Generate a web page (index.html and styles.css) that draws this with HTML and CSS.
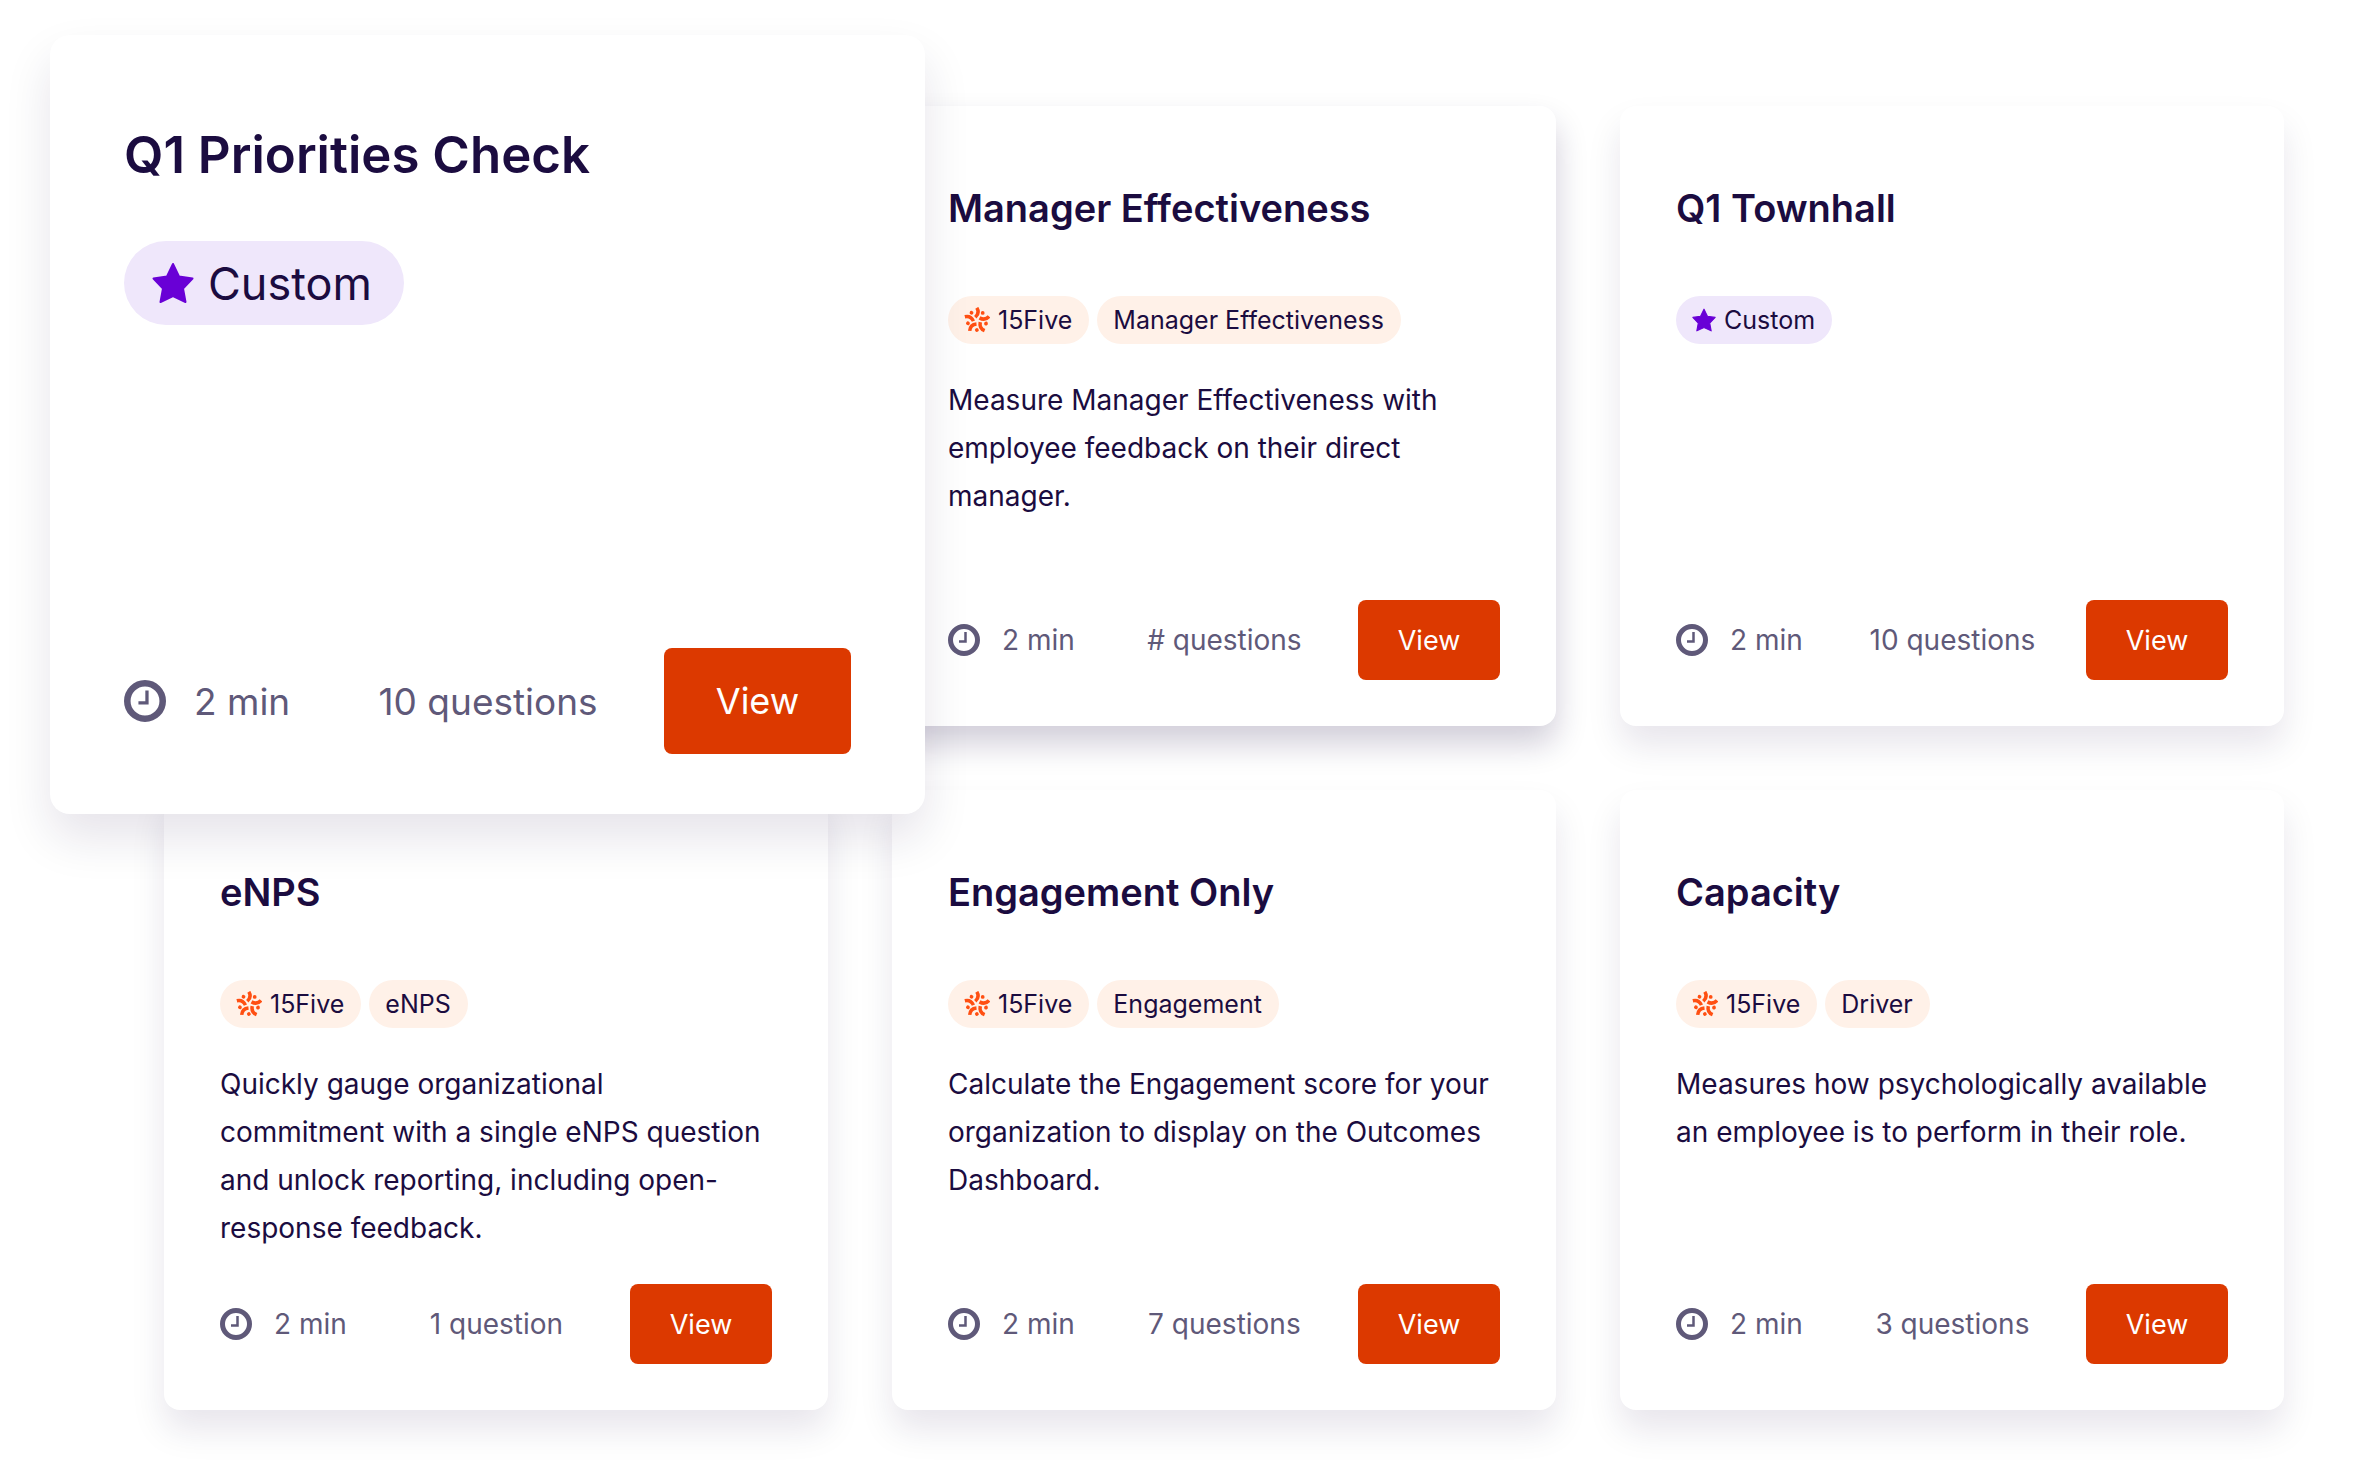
FILE: index.html
```html
<!DOCTYPE html>
<html lang="en">
<head>
    <meta charset="UTF-8">
    <meta name="viewport" content="width=device-width, initial-scale=1.0">
    <title>Surveys</title>
    <link rel="stylesheet" href="styles.css">
</head>
<body>
    <!-- Shared icons -->
    <svg class="sprite" aria-hidden="true">
        <symbol id="star" viewBox="0 0 42 40">
            <path d="M21 1 L27 13.500 L40.500 15.500 L31 25.500 L33.500 39 L21 33 L8.500 39 L11 25.500 L1.500 15.500 L15 13.500 Z" fill="#6900d6" stroke="#6900d6" stroke-width="2" stroke-linejoin="round"/>
        </symbol>
        <symbol id="clock" viewBox="0 0 32 32">
            <circle cx="16" cy="16" r="13.500" fill="none" stroke="#5f5979" stroke-width="5"/>
            <path d="M17.500 8 V17.500 H11" fill="none" stroke="#5f5979" stroke-width="2.500"/>
        </symbol>
        <symbol id="burst" viewBox="0 0 26 26">
            <g id="ray">
                <path d="M12.800 0.800 Q16 6 11.300 10.300" fill="none" stroke="#ff4f12" stroke-width="3.500"/>
                <circle cx="18.700" cy="5.900" r="1.900" fill="#ff4f12"/>
            </g>
            <use href="#ray" transform="rotate(72 13 13.500)"/>
            <use href="#ray" transform="rotate(144 13 13.500)"/>
            <use href="#ray" transform="rotate(216 13 13.500)"/>
            <use href="#ray" transform="rotate(288 13 13.500)"/>
        </symbol>
    </svg>

    <main class="board">
        <article class="card featured">
            <h2>Q1 Priorities Check</h2>
            <div class="tags">
                <span class="tag custom"><svg class="star"><use href="#star"/></svg>Custom</span>
            </div>
            <div class="footer">
                <span class="time"><svg class="clock"><use href="#clock"/></svg>2 min</span>
                <span class="count">10 questions</span>
                <button class="btn">View</button>
            </div>
        </article>

        <article class="card raised">
            <h2>Manager Effectiveness</h2>
            <div class="tags">
                <span class="tag"><svg class="burst"><use href="#burst"/></svg>15Five</span>
                <span class="tag">Manager Effectiveness</span>
            </div>
            <p>Measure Manager Effectiveness with<br>employee feedback on their direct<br>manager.</p>
            <div class="footer">
                <span class="time"><svg class="clock"><use href="#clock"/></svg>2 min</span>
                <span class="count"># questions</span>
                <button class="btn">View</button>
            </div>
        </article>

        <article class="card">
            <h2>Q1 Townhall</h2>
            <div class="tags">
                <span class="tag custom"><svg class="star"><use href="#star"/></svg>Custom</span>
            </div>
            <div class="footer">
                <span class="time"><svg class="clock"><use href="#clock"/></svg>2 min</span>
                <span class="count">10 questions</span>
                <button class="btn">View</button>
            </div>
        </article>

        <article class="card">
            <h2>eNPS</h2>
            <div class="tags">
                <span class="tag"><svg class="burst"><use href="#burst"/></svg>15Five</span>
                <span class="tag">eNPS</span>
            </div>
            <p>Quickly gauge organizational<br>commitment with a single eNPS question<br>and unlock reporting, including open-<br>response feedback.</p>
            <div class="footer">
                <span class="time"><svg class="clock"><use href="#clock"/></svg>2 min</span>
                <span class="count">1 question</span>
                <button class="btn">View</button>
            </div>
        </article>

        <article class="card">
            <h2>Engagement Only</h2>
            <div class="tags">
                <span class="tag"><svg class="burst"><use href="#burst"/></svg>15Five</span>
                <span class="tag">Engagement</span>
            </div>
            <p>Calculate the Engagement score for your<br>organization to display on the Outcomes<br>Dashboard.</p>
            <div class="footer">
                <span class="time"><svg class="clock"><use href="#clock"/></svg>2 min</span>
                <span class="count">7 questions</span>
                <button class="btn">View</button>
            </div>
        </article>

        <article class="card">
            <h2>Capacity</h2>
            <div class="tags">
                <span class="tag"><svg class="burst"><use href="#burst"/></svg>15Five</span>
                <span class="tag">Driver</span>
            </div>
            <p>Measures how psychologically available<br>an employee is to perform in their role.</p>
            <div class="footer">
                <span class="time"><svg class="clock"><use href="#clock"/></svg>2 min</span>
                <span class="count">3 questions</span>
                <button class="btn">View</button>
            </div>
        </article>
    </main>
</body>
</html>
```
FILE: styles.css
```css
* {
    box-sizing: border-box;
}
body {
    margin: 0;
    background: white;
    color: #1b0c40;
    font-family: Inter, "Open Sans", sans-serif;
}
.sprite {
    display: none;
}
.board {
    display: grid;
    grid-template-columns: repeat(3, 1fr);
    gap: 64px;
    padding: 106px 72px 64px 164px;
}
.card {
    display: flex;
    flex-direction: column;
    min-height: 620px;
    padding: 70px 56px 46px;
    background: white;
    border-radius: 16px;
    box-shadow: 0 20px 34px rgba(27, 12, 64, 0.1);
}
.raised {
    box-shadow: 0 18px 32px rgba(27, 12, 64, 0.2);
}
h2 {
    margin: 0 0 56px;
    font-size: 38px;
    line-height: 64px;
    font-weight: 600;
}
.tags {
    display: flex;
    gap: 8px;
    margin-bottom: 32px;
}
.tag {
    display: flex;
    align-items: center;
    gap: 8px;
    height: 48px;
    padding: 0 17px 0 16px;
    border-radius: 24px;
    background: #fff1e8;
    font-size: 25px;
    white-space: nowrap;
}
.custom {
    background: #efe7fb;
}
.star {
    width: 24px;
    height: 24px;
}
.burst {
    width: 26px;
    height: 26px;
}
p {
    margin: 0;
    font-size: 28px;
    line-height: 48px;
    white-space: nowrap;
}
.footer {
    display: flex;
    align-items: center;
    margin-top: auto;
    color: #5f5979;
    font-size: 28px;
}
.time {
    display: flex;
    align-items: center;
    gap: 22px;
}
.count {
    flex: 1;
    padding-left: 16px;
    text-align: center;
}
.clock {
    width: 32px;
    height: 32px;
}
.btn {
    width: 142px;
    height: 80px;
    border: none;
    border-radius: 8px;
    background: #dc3900;
    color: white;
    font-family: inherit;
    font-size: 27px;
    cursor: pointer;
}
.btn:hover {
    background: #b93000;
}

/* Enlarged card, spreads over its neighbours */
.featured {
    z-index: 1;
    margin: -71px -97px -88px -114px;
    padding: 78px 74px 60px;
    border-radius: 20px;
    box-shadow: 0 24px 48px rgba(27, 12, 64, 0.11);
}
.featured h2 {
    margin-bottom: 44px;
    font-size: 51px;
    line-height: 84px;
}
.featured .tag {
    gap: 14px;
    height: 84px;
    padding: 0 32px 0 28px;
    border-radius: 42px;
    font-size: 45px;
}
.featured .star {
    width: 42px;
    height: 42px;
}
.featured .footer {
    font-size: 37px;
}
.featured .time {
    gap: 28px;
}
.featured .count {
    padding-left: 22px;
}
.featured .clock {
    width: 42px;
    height: 42px;
}
.featured .btn {
    width: 187px;
    height: 106px;
    font-size: 36px;
}
```
